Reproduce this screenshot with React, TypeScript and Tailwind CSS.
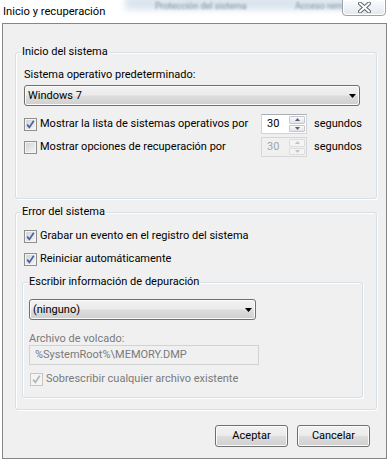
import type { ReactNode } from "react"

const btnFace =
  "rounded-[3px] border border-[#707070] bg-[linear-gradient(#f2f2f2_0%,#ebebeb_48%,#dddddd_52%,#cfcfcf_100%)] shadow-[inset_0_0_0_1px_#fbfbfb]"

function Check({ checked = false, disabled = false }: { checked?: boolean; disabled?: boolean }) {
  return (
    <span
      className={`w-[13px] h-[13px] shrink-0 border flex items-center justify-center ${
        disabled
          ? "border-[#c6c6c6] bg-[#f4f4f4]"
          : "border-[#8e8f8f] bg-[linear-gradient(135deg,#cdd1d6,#f7f7f7)] shadow-[inset_0_0_0_1px_#f4f4f4]"
      }`}
    >
      {checked && (
        <svg width="11" height="11" viewBox="0 0 11 11">
          <path
            d="M2.2 5.6 L4.4 8.4 L8.8 1.8"
            fill="none"
            stroke={disabled ? "#b4b4b4" : "#4a5f9c"}
            strokeWidth="1.7"
          />
        </svg>
      )}
    </span>
  )
}

function Arrow({ up, disabled }: { up?: boolean; disabled?: boolean }) {
  return (
    <svg width="5" height="3" viewBox="0 0 5 3">
      <path d={up ? "M0 3 L2.5 0 L5 3 Z" : "M0 0 L5 0 L2.5 3 Z"} fill={disabled ? "#c4c4c4" : "#4d6185"} />
    </svg>
  )
}

function Spinner({ disabled = false }: { disabled?: boolean }) {
  const btn = `flex-1 flex items-center justify-center rounded-[1px] border ${
    disabled ? "border-[#dcdcdc] bg-[#f4f4f4]" : "border-[#c4c8ce] bg-[linear-gradient(#fafafa,#e4e4e4)]"
  }`
  return (
    <div
      className={`w-[46px] h-[20px] shrink-0 flex border ${
        disabled ? "bg-[#f0f0f0] border-[#d6d6d6] text-[#a3a3a3]" : "bg-white border-[#d0d3d8] border-t-[#abadb3]"
      }`}
    >
      <span className="flex-1 pl-[5px] leading-[18px]">30</span>
      <div className="w-[17px] flex flex-col py-[1px] pr-[1px] gap-[1px]">
        <span className={btn}>
          <Arrow up disabled={disabled} />
        </span>
        <span className={btn}>
          <Arrow disabled={disabled} />
        </span>
      </div>
    </div>
  )
}

function Combo({ text, width }: { text: string; width: string }) {
  return (
    <div className={`${width} h-[21px] ${btnFace} flex items-center pl-[3px]`}>
      <span className="leading-[16px]">{text}</span>
      <svg className="ml-auto mr-[3px]" width="7" height="4" viewBox="0 0 7 4">
        <path d="M0 0 L7 0 L3.5 4 Z" fill="#000" />
      </svg>
    </div>
  )
}

function Group({ label, className, children }: { label: string; className: string; children: ReactNode }) {
  return (
    <div
      className={`relative rounded-[3px] border border-[#d5dfe5] shadow-[inset_1px_1px_0_#fff,1px_1px_0_#fff] ${className}`}
    >
      <span className="absolute top-[-9px] left-[5px] px-[1px] bg-[#f0f0f0] leading-[16px]">{label}</span>
      {children}
    </div>
  )
}

function CheckRow({ checked, label, className = "" }: { checked?: boolean; label: string; className?: string }) {
  return (
    <label className={`flex items-center gap-[3px] h-[16px] ${className}`}>
      <Check checked={checked} />
      <span className="leading-[16px] whitespace-nowrap">{label}</span>
    </label>
  )
}

export default function App() {
  return (
    <div className="w-[390px] h-[465px] bg-white overflow-hidden font-['Roboto'] text-[11px] text-black">
      {/* barra de título */}
      <div className="relative h-[23px] flex items-start">
        <div className="absolute inset-0 pointer-events-none">
          <div className="absolute left-[125px] top-[-4px] w-[250px] h-[14px] bg-[#dbe5ee] blur-[3px]" />
          <span className="absolute left-[155px] top-[1px] leading-[10px] text-[9px] text-[#7d8c9b] blur-[1.2px]">
            Protección del sistema
          </span>
          <span className="absolute left-[295px] top-[1px] leading-[10px] text-[9px] text-[#7d8c9b] blur-[1.2px]">
            Acceso remoto
          </span>
        </div>
        <span className="relative pl-[3px] pt-[4px] leading-[16px] text-[11.2px]">Inicio y recuperación</span>
        <div className="relative ml-auto mr-[4px] mt-[-1px] w-[44px] h-[17px] rounded-b-[4px] border border-[#9ea3a9] bg-[linear-gradient(#fbfcfd,#e3e8ee)] shadow-[inset_0_0_0_1px_#ffffff] flex items-center justify-center">
          <svg width="13" height="11" viewBox="0 0 13 11">
            <path d="M2 1.5 L11 9.5 M11 1.5 L2 9.5" stroke="#5e6670" strokeWidth="4" strokeLinecap="round" />
            <path d="M2 1.5 L11 9.5 M11 1.5 L2 9.5" stroke="#ffffff" strokeWidth="2" strokeLinecap="round" />
          </svg>
        </div>
      </div>

      {/* área cliente */}
      <div className="ml-[2px] w-[385px] h-[436px] border border-[#868686] bg-[#f0f0f0] flex flex-col">
        <Group label="Inicio del sistema" className="ml-[12px] mt-[28px] w-[362px] h-[147px] shrink-0 pl-[8px] pt-[14px]">
          <div className="leading-[16px]">Sistema operativo predeterminado:</div>
          <div className="mt-[2px]">
            <Combo text="Windows 7" width="w-[336px]" />
          </div>
          <div className="mt-[8px] flex items-center h-[20px]">
            <div className="w-[237px] shrink-0">
              <CheckRow checked label="Mostrar la lista de sistemas operativos por" />
            </div>
            <Spinner />
            <span className="ml-[7px]">segundos</span>
          </div>
          <div className="mt-[3px] flex items-center h-[20px]">
            <div className="w-[237px] shrink-0">
              <CheckRow label="Mostrar opciones de recuperación por" />
            </div>
            <Spinner disabled />
            <span className="ml-[7px]">segundos</span>
          </div>
        </Group>

        <Group label="Error del sistema" className="ml-[12px] mt-[13px] w-[362px] h-[198px] shrink-0 pl-[6px] pt-[15px]">
          <CheckRow checked label="Grabar un evento en el registro del sistema" className="pl-[2px]" />
          <CheckRow checked label="Reiniciar automáticamente" className="pl-[2px] mt-[7px]" />

          <Group label="Escribir información de depuración" className="mt-[15px] w-[341px] h-[116px] pl-[6px] pt-[16px]">
            <Combo text="(ninguno)" width="w-[227px]" />
            <div className="mt-[13px] leading-[12px] text-[#7a7a7a]">Archivo de volcado:</div>
            <div className="w-[230px] h-[20px] border border-[#d2d2d2] bg-[#f0f0f0] pl-[5px] leading-[18px] text-[#7a7a7a]">
              %SystemRoot%\MEMORY.DMP
            </div>
            <div className="mt-[6px] pl-[1px] flex items-center gap-[3px] h-[16px]">
              <Check checked disabled />
              <span className="leading-[16px] text-[#7a7a7a]">Sobrescribir cualquier archivo existente</span>
            </div>
          </Group>
        </Group>

        <div className="mt-[15px] pr-[16px] flex justify-end gap-[9px]">
          <button className={`w-[73px] h-[22px] ${btnFace} leading-[18px]`}>Aceptar</button>
          <button className={`w-[73px] h-[22px] ${btnFace} leading-[18px]`}>Cancelar</button>
        </div>
      </div>
    </div>
  )
}
